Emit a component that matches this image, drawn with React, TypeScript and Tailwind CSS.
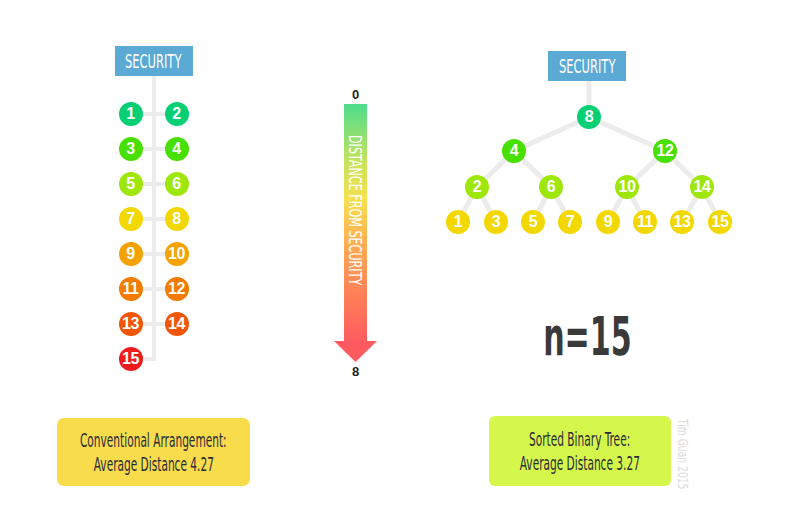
import React from 'react';

const cond = "font-['Liberation_Sans_Narrow','DejaVu_Sans_Condensed','Liberation_Sans',sans-serif]";

const colorOf: Record<number, string> = {
  1: 'bg-[#06cf74]', 2: 'bg-[#06cf74]',
  3: 'bg-[#48e000]', 4: 'bg-[#48e000]',
  5: 'bg-[#9fe60a]', 6: 'bg-[#9fe60a]',
  7: 'bg-[#f3d800]', 8: 'bg-[#f3d800]',
  9: 'bg-[#f3a200]', 10: 'bg-[#f3a200]',
  11: 'bg-[#f27b00]', 12: 'bg-[#f27b00]',
  13: 'bg-[#f05508]', 14: 'bg-[#f05508]',
  15: 'bg-[#ee1c1c]',
};

const Dot = ({ n, color }: { n: number; color: string }) => (
  <div
    className={`w-[24px] h-[24px] rounded-full ${color} flex items-center justify-center text-white font-bold text-[16px] tracking-[-0.5px] font-['Liberation_Sans',Arial,sans-serif]`}
  >
    {n}
  </div>
);

const Security = ({ className = '' }: { className?: string }) => (
  <div className={`w-[78px] h-[30px] bg-[#5ba9d5] flex items-center justify-center ${className}`}>
    <span className={`${cond} text-white text-[20px] inline-block scale-x-[0.64] leading-none whitespace-nowrap`}>SECURITY</span>
  </div>
);

const BoxLine = ({ children }: { children: React.ReactNode }) => (
  <span className={`${cond} text-[19px] leading-[24px] inline-block scale-x-[0.62] whitespace-nowrap`}>{children}</span>
);

const rows = [[1, 2], [3, 4], [5, 6], [7, 8], [9, 10], [11, 12], [13, 14], [15]];

// tree node centres, relative to tree box (x 440, y 40)
const tree: { n: number; x: number; y: number; c: string }[] = [
  { n: 8, x: 149, y: 77, c: 'bg-[#06cf74]' },
  { n: 4, x: 74, y: 111, c: 'bg-[#48e000]' },
  { n: 12, x: 225, y: 111, c: 'bg-[#48e000]' },
  { n: 2, x: 37, y: 147, c: 'bg-[#9fe60a]' },
  { n: 6, x: 111, y: 147, c: 'bg-[#9fe60a]' },
  { n: 10, x: 187, y: 147, c: 'bg-[#9fe60a]' },
  { n: 14, x: 262, y: 147, c: 'bg-[#9fe60a]' },
  { n: 1, x: 18, y: 182, c: 'bg-[#f3d800]' },
  { n: 3, x: 56, y: 182, c: 'bg-[#f3d800]' },
  { n: 5, x: 93, y: 182, c: 'bg-[#f3d800]' },
  { n: 7, x: 130, y: 182, c: 'bg-[#f3d800]' },
  { n: 9, x: 168, y: 182, c: 'bg-[#f3d800]' },
  { n: 11, x: 205, y: 182, c: 'bg-[#f3d800]' },
  { n: 13, x: 242, y: 182, c: 'bg-[#f3d800]' },
  { n: 15, x: 280, y: 182, c: 'bg-[#f3d800]' },
];

const edges: [number, number][] = [
  [0, 1], [0, 2], [1, 3], [1, 4], [2, 5], [2, 6],
  [3, 7], [3, 8], [4, 9], [4, 10], [5, 11], [5, 12], [6, 13], [6, 14],
];

export default function App() {
  return (
    <div className="w-[800px] h-[516px] bg-white flex overflow-hidden">
      {/* conventional arrangement */}
      <div className="w-[193px] ml-[57px] flex flex-col items-center">
        <Security className="mt-[46px]" />
        <div className="w-[4px] h-[20px] bg-[#ececec]" />
        {rows.map((r, i) => (
          <div key={i} className="grid grid-cols-[24px_22px_24px] h-[35px] items-center">
            <Dot n={r[0]} color={colorOf[r[0]]} />
            <div className="relative h-full">
              <div
                className={`absolute left-[9px] w-[4px] top-0 bg-[#ececec] ${r.length === 1 ? 'h-[20px]' : 'h-full'}`}
              />
              <div
                className={`absolute top-[16px] h-[4px] bg-[#ececec] ${r.length === 1 ? 'left-0 w-[13px]' : 'left-0 right-0'}`}
              />
            </div>
            {r[1] ? <Dot n={r[1]} color={colorOf[r[1]]} /> : <div />}
          </div>
        ))}
        <div className="mt-[42px] w-[193px] h-[68px] rounded-[7px] bg-[#f8dc4c] flex flex-col items-center justify-center text-[#2b2b38]">
          <BoxLine>Conventional Arrangement:</BoxLine>
          <BoxLine>Average Distance 4.27</BoxLine>
        </div>
      </div>

      {/* distance arrow */}
      <div className="ml-[84px] w-[43px] flex flex-col items-center">
        <div className="mt-[87px] h-[16px] leading-[16px] text-[13px] font-bold text-[#222] font-['Liberation_Sans',Arial,sans-serif]">0</div>
        <div className="mt-[1px] w-[23px] h-[237px] bg-[linear-gradient(to_bottom,#4edd8d_0%,#c9e35a_25%,#f7e04e_40%,#ffb052_58%,#ff8a56_75%,#ff5c60_100%)] flex justify-center items-start">
          <span className={`${cond} mt-[31px] text-white text-[18px] leading-[23px] [writing-mode:vertical-rl] inline-block origin-top scale-y-[0.69] whitespace-nowrap`}>
            DISTANCE FROM SECURITY
          </span>
        </div>
        <svg width="43" height="21" viewBox="0 0 43 21" className="block">
          <polygon points="0,0 43,0 21.5,21" fill="#ff5a60" />
        </svg>
        <div className="mt-[2px] h-[16px] leading-[16px] text-[13px] font-bold text-[#222] font-['Liberation_Sans',Arial,sans-serif]">8</div>
      </div>

      {/* sorted binary tree */}
      <div className="ml-[63px] w-[300px] flex flex-col">
        <div className="relative mt-[40px] h-[200px]">
          <svg width="300" height="200" className="absolute inset-0">
            <line x1="149" y1="40" x2="149" y2="77" stroke="#ececec" strokeWidth="5" />
            {edges.map(([a, b], i) => (
              <line key={i} x1={tree[a].x} y1={tree[a].y} x2={tree[b].x} y2={tree[b].y} stroke="#ececec" strokeWidth="5" />
            ))}
          </svg>
          <Security className="absolute left-[108px] top-[11px]" />
          {tree.map((t) => (
            <div key={t.n} className="absolute" style={{ left: t.x - 12, top: t.y - 12 }}>
              <Dot n={t.n} color={t.c} />
            </div>
          ))}
        </div>
        <div className="mt-[71px] h-[54px] flex justify-center pr-[6px]">
          <span className={`${cond} font-bold text-[54px] leading-[54px] text-[#3a3a3a] inline-block scale-x-[0.62] whitespace-nowrap`}>n=15</span>
        </div>
        <div className="mt-[52px] flex items-start">
          <div className="ml-[49px] w-[182px] h-[70px] rounded-[6px] bg-[#d5f74b] flex flex-col items-center justify-center text-[#2b2b38]">
            <BoxLine>Sorted Binary Tree:</BoxLine>
            <BoxLine>Average Distance 3.27</BoxLine>
          </div>
          <span className={`${cond} ml-[5px] mt-[3px] text-[#dcdcdc] text-[14px] leading-[14px] [writing-mode:vertical-rl] inline-block origin-top scale-y-[0.73] whitespace-nowrap`}>
            Tim Guan 2015
          </span>
        </div>
      </div>
    </div>
  );
}
